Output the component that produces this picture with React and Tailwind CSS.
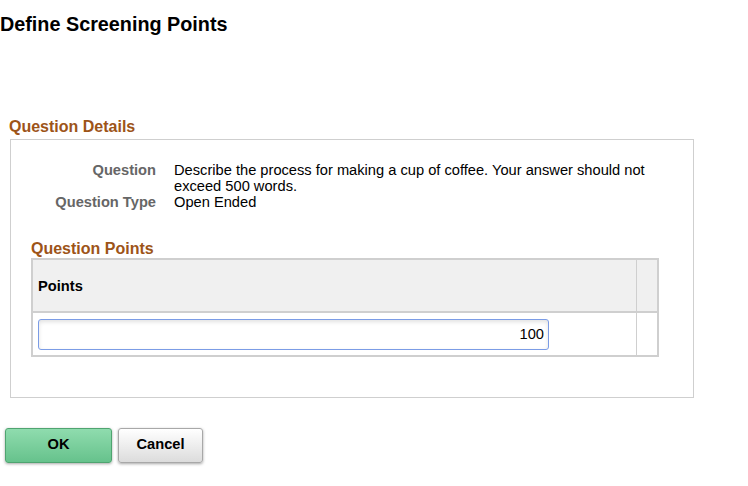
export default function App() {
  return (
    <div className="w-[748px] h-[486px] bg-white font-['Liberation_Sans',Arial,sans-serif] text-[14.67px] text-[#333]">
      <h1 className="pt-[13px] pl-0 text-[19.8px] leading-[22px] font-bold text-black">
        Define Screening Points
      </h1>

      <div className="mt-[83px] pl-[9px]">
        <h2 className="text-[16px] leading-[18px] font-bold text-[#9d5418]">Question Details</h2>
        <div className="mt-[3px] ml-px w-[684px] h-[259px] border border-[#cfcfcf] pt-[22px]">
          <div className="grid grid-cols-[145px_1fr] gap-x-[18px] leading-[16px]">
            <div className="text-right font-bold text-[#666]">Question</div>
            <div className="text-black pr-[40px]">
              Describe the process for making a cup of coffee. Your answer should not exceed 500 words.
            </div>
            <div className="text-right font-bold text-[#666]">Question Type</div>
            <div className="text-black">Open Ended</div>
          </div>

          <div className="mt-[30px] ml-[20px]">
            <h3 className="text-[16px] leading-[18px] font-bold text-[#9d5418]">Question Points</h3>
            <table className="w-[628px] border-collapse border-2 border-[#cfcfcf]">
              <thead>
                <tr className="h-[53px] bg-[#f0f0f0]">
                  <th className="text-left font-bold text-black pl-[5px] border-b-2 border-[#cfcfcf]">Points</th>
                  <th className="w-[22px] border-l border-b-2 border-[#cfcfcf]"></th>
                </tr>
              </thead>
              <tbody>
                <tr className="h-[44px]">
                  <td className="pl-[5px]">
                    <div className="w-[511px] h-[31px] rounded-[3px] border border-[#7b9ce6] bg-white shadow-[inset_0_2px_4px_rgba(0,0,0,0.12)] flex items-center justify-end pr-[4px] text-black">
                      100
                    </div>
                  </td>
                  <td className="w-[22px] border-l border-[#cfcfcf]"></td>
                </tr>
              </tbody>
            </table>
          </div>
        </div>
      </div>

      <div className="mt-[30px] pl-[5px] flex gap-[6px]">
        <button className="w-[107px] h-[35px] pb-[3px] rounded-[3px] border border-[#4fa470] bg-gradient-to-b from-[#8fdcae] to-[#66c28c] shadow-[0_1px_3px_rgba(0,0,0,0.35)] font-bold text-black text-[14.67px]">
          OK
        </button>
        <button className="w-[85px] h-[35px] pb-[3px] rounded-[3px] border border-[#a8a8a8] bg-gradient-to-b from-white to-[#dcdcdc] shadow-[0_1px_3px_rgba(0,0,0,0.35)] font-bold text-black text-[14.67px]">
          Cancel
        </button>
      </div>
    </div>
  );
}
